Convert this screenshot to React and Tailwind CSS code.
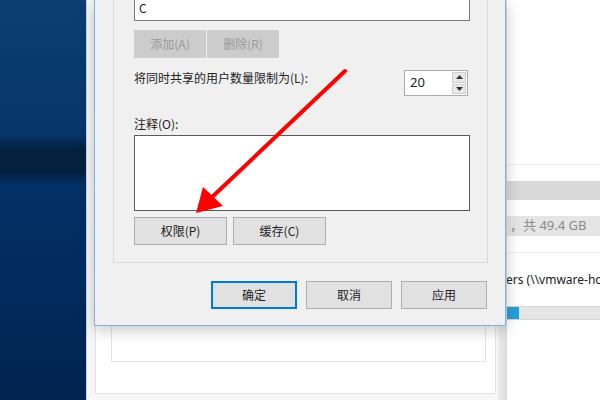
import React from 'react';

// Windows "高级共享" dialog over an explorer window, with a red pointer arrow
const btn = "h-[28px] flex items-center justify-center bg-[#e1e1e1] border border-[#adadad] text-[12px] text-[#222]";

function Desktop() {
  return (
    <div className="absolute left-0 top-0 w-[88px] h-[400px] bg-[linear-gradient(180deg,#0b3f72_0px,#07356a_135px,#03203f_150px,#03203f_172px,#033066_185px,#022a5c_300px,#01234f_400px)]" />
  );
}

function BackWindow() {
  return (
    <div className="absolute left-[86px] top-0 w-[412px] h-[400px] bg-[#f7f7f7] border-l border-[#cfd3d8]">
      <div className="ml-[8px] w-[401px] h-[394px] bg-white border-l border-b border-r border-[#e3e3e3]">
        <div className="ml-[15px] w-[375px] h-[362px] border-l border-r border-b border-[#e3e3e3]" />
      </div>
    </div>
  );
}

function Explorer() {
  return (
    <div className="absolute left-[498px] top-0 w-[102px] h-[400px] bg-white flex flex-col">
      <div className="absolute left-0 top-0 w-[9px] h-[400px] bg-[linear-gradient(90deg,#ececec,#dcdcdc)]" />
      <div className="h-[165px] border-b border-[#ececec]" />
      <div className="mt-[16px] h-[19px] bg-[#d9d9d9]" />
      <div className="mt-[16px] h-[20px] bg-[#e5e5e5] flex items-center pl-[12px] text-[13px] text-[#8a8a8a] font-['Noto_Sans','Noto_Sans_CJK_SC',sans-serif] whitespace-nowrap">
        ，共 49.4 GB
      </div>
      <div className="mt-[16px] h-px bg-[#ececec]" />
      <div className="mt-[17px] h-[20px] flex items-center pl-[8px] text-[12px] text-[#222] font-['Noto_Sans','Noto_Sans_CJK_SC',sans-serif] whitespace-nowrap">
        ers (\\vmware-ho
      </div>
      <div className="mt-[16px] h-[14px] bg-[#e6e6e6] border-y border-[#d6d6d6] flex">
        <div className="w-[21px] bg-[#26a0da]" />
      </div>
    </div>
  );
}

function Dialog() {
  return (
    <div className="absolute left-[94px] top-0 w-[412px] h-[326px] bg-[#f0f0f0] border-x border-b border-[#7fb0e0] shadow-[0_4px_14px_rgba(0,0,0,0.22)] flex flex-col font-['Noto_Sans_CJK_SC',sans-serif] text-[12px] text-[#222]">
      <div className="ml-[18px] w-[375px] h-[263px] border-x border-b border-[#dadada] pl-[20px] flex flex-col">
        <div className="w-[336px] h-[21px] bg-white border-x border-b border-[#7a7a7a] pl-[4px] pt-[1px] leading-[14px]">C</div>

        <div className="mt-[9px] flex gap-[1px]">
          <div className="w-[72px] h-[28px] flex items-center justify-center bg-[#cccccc] text-[#9a9a9a]">添加(A)</div>
          <div className="w-[72px] h-[28px] flex items-center justify-center bg-[#cccccc] text-[#9a9a9a]">删除(R)</div>
        </div>

        <div className="mt-[12px] w-[334px] flex justify-between items-start">
          <span className="pt-[1px] leading-[14px]">将同时共享的用户数量限制为(L):</span>
          <div className="w-[64px] h-[26px] bg-white border border-[#acacac] flex">
            <span className="flex-1 pl-[5px] flex items-center text-[13px] font-['Noto_Sans',sans-serif]">20</span>
            <div className="w-[15px] flex flex-col gap-[1px] py-[1px] pr-[1px]">
              <div className="flex-1 bg-[#e8e8e8] border border-[#cfcfcf] flex items-center justify-center">
                <svg width="7" height="4" viewBox="0 0 7 4"><path d="M0 4 L3.5 0 L7 4 Z" fill="#333" /></svg>
              </div>
              <div className="flex-1 bg-[#e8e8e8] border border-[#cfcfcf] flex items-center justify-center">
                <svg width="7" height="4" viewBox="0 0 7 4"><path d="M0 0 L3.5 4 L7 0 Z" fill="#333" /></svg>
              </div>
            </div>
          </div>
        </div>

        <span className="mt-[21px] leading-[14px]">注释(O):</span>
        <div className="mt-[4px] w-[336px] h-[76px] bg-white border border-[#5a5a5a]" />

        <div className="mt-[6px] flex gap-[6px]">
          <div className={`${btn} w-[93px]`}>权限(P)</div>
          <div className={`${btn} w-[93px]`}>缓存(C)</div>
        </div>
      </div>

      <div className="mt-[18px] pr-[18px] flex justify-end gap-[9px]">
        <div className="w-[86px] h-[28px] flex items-center justify-center bg-[#e1e1e1] border-2 border-[#0078d7]">确定</div>
        <div className={`${btn} w-[86px]`}>取消</div>
        <div className={`${btn} w-[86px]`}>应用</div>
      </div>
    </div>
  );
}

function Arrow() {
  return (
    <svg className="absolute left-0 top-0 pointer-events-none" width="600" height="400" viewBox="0 0 600 400">
      <line x1="345" y1="71" x2="210" y2="199" stroke="#ff0000" strokeWidth="4" strokeLinecap="round" />
      <path d="M196 213 L203 187 L223 206 Z" fill="#ff0000" />
    </svg>
  );
}

export default function App() {
  return (
    <div className="relative w-[600px] h-[400px] overflow-hidden bg-white">
      <Desktop />
      <BackWindow />
      <Explorer />
      <Dialog />
      <Arrow />
    </div>
  );
}
